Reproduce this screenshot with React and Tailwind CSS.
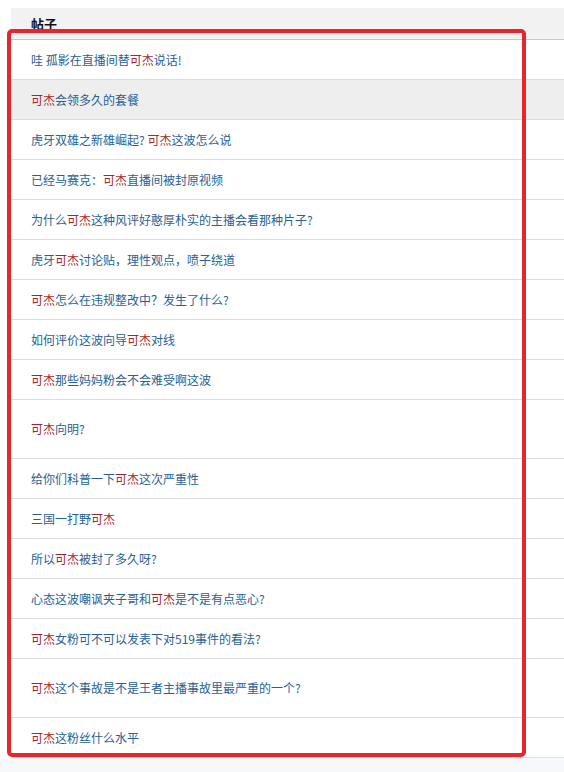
import React from 'react';

const posts = [
  { parts: ['哇 孤影在直播间替', '*可杰', '说话!'] },
  { parts: ['*可杰', '会领多久的套餐'], hover: true },
  { parts: ['虎牙双雄之新雄崛起?\u00a0', '*可杰', '这波怎么说'] },
  { parts: ['已经马赛克：', '*可杰', '直播间被封原视频'] },
  { parts: ['为什么', '*可杰', '这种风评好憨厚朴实的主播会看那种片子?'] },
  { parts: ['虎牙', '*可杰', '讨论贴，理性观点，喷子绕道'] },
  { parts: ['*可杰', '怎么在违规整改中？发生了什么?'] },
  { parts: ['如何评价这波向导', '*可杰', '对线'] },
  { parts: ['*可杰', '那些妈妈粉会不会难受啊这波'] },
  { parts: ['*可杰', '向明?'], tall: true },
  { parts: ['给你们科普一下', '*可杰', '这次严重性'] },
  { parts: ['三国一打野', '*可杰'] },
  { parts: ['所以', '*可杰', '被封了多久呀?'] },
  { parts: ['心态这波嘲讽夹子哥和', '*可杰', '是不是有点恶心?'] },
  { parts: ['*可杰', '女粉可不可以发表下对519事件的看法?'] },
  { parts: ['*可杰', '这个事故是不是王者主播事故里最严重的一个?'], tall: true },
  { parts: ['*可杰', '这粉丝什么水平'] },
];

const App = () => {
  return (
    <div className="relative w-[564px] h-[772px] bg-white overflow-hidden" style={{ fontFamily: '"Microsoft YaHei", "Noto Sans CJK SC", sans-serif' }}>
      <div className="pt-[8px] pl-[11px]">
        {/* header */}
        <div className="h-[32px] bg-[#f2f2f2] border-b border-[#c8c8c8] flex items-center pl-[20px] text-[13px] font-bold text-[#111]">
          帖子
        </div>

        {posts.map((post, i) => (
          <div
            key={i}
            className={`${post.tall ? 'h-[59px]' : 'h-[40px]'} ${post.hover ? 'bg-[#eeeeee]' : 'bg-white'} border-b border-[#dddddd] flex items-center pl-[20px] text-[12px] text-[#285f94]`}
          >
            {post.parts.map((p, j) =>
              p.startsWith('*') ? (
                <span key={j} className="text-[#a3282e]">{p.slice(1)}</span>
              ) : (
                <span key={j}>{p}</span>
              )
            )}
          </div>
        ))}
      </div>
      <div className="h-[20px] bg-[#f7f8fa]" />

      {/* red annotation box */}
      <div className="absolute left-[7px] top-[29px] w-[519px] h-[728px] border-[4px] border-[#e8262a] rounded-[5px] pointer-events-none" />
    </div>
  );
};

export default App;
